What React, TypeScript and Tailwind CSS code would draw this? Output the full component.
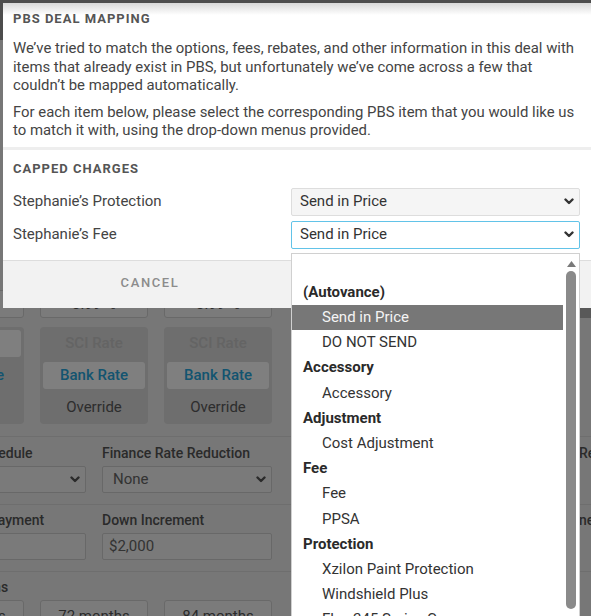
import React from "react";

const groups = [
  { label: "(Autovance)", items: ["Send in Price", "DO NOT SEND"] },
  { label: "Accessory", items: ["Accessory"] },
  { label: "Adjustment", items: ["Cost Adjustment"] },
  { label: "Fee", items: ["Fee", "PPSA"] },
  {
    label: "Protection",
    items: ["Xzilon Paint Protection", "Windshield Plus", "Flex 245 Series C"],
  },
];

function Chevron({ color = "#333" }: { color?: string }) {
  return (
    <svg width="10" height="7" viewBox="0 0 10 7" fill="none">
      <path
        d="M1.5 1.5 5 5l3.5-3.5"
        stroke={color}
        strokeWidth="2.4"
        strokeLinecap="round"
        strokeLinejoin="round"
      />
    </svg>
  );
}

function RateBox({ text }: { text: string }) {
  return (
    <div className="flex h-[28px] w-[108px] items-center justify-center rounded-[3px] border border-[#d2d2d2] bg-[#f7f7f7] text-[15px] text-[#5a5a5a]">
      {text}
    </div>
  );
}

function RateCard({ first }: { first?: boolean }) {
  return (
    <div className="flex h-[97px] w-[108px] flex-col gap-[5px] rounded-[4px] bg-[#dcdcdc] p-[3px] text-[15px]">
      <div
        className={`flex h-[27px] items-center justify-center rounded-[3px] font-medium ${
          first ? "bg-white text-[#5a5a5a]" : "text-[#c8c8c8]"
        }`}
      >
        SCI Rate
      </div>
      <div
        className={`flex h-[27px] items-center justify-center rounded-[3px] font-medium text-[#26a8e0] ${
          first ? "" : "bg-[#ffffff]"
        }`}
      >
        Bank Rate
      </div>
      <div className="flex h-[27px] items-center justify-center rounded-[3px] text-[#5a5a5a]">
        Override
      </div>
    </div>
  );
}

function Row({
  left,
  right,
  className = "",
}: {
  left: React.ReactNode;
  right?: React.ReactNode;
  className?: string;
}) {
  return (
    <div className={`ml-[-84px] flex ${className}`}>
      <div className="w-[356px] shrink-0">{left}</div>
      <div className="w-[307px] shrink-0" />
      <div className="w-[200px] shrink-0">{right}</div>
    </div>
  );
}

function Field({ label, children }: { label: string; children: React.ReactNode }) {
  return (
    <div className="w-[170px]">
      <div className="h-[18px] text-[14px] leading-[18px] font-medium whitespace-nowrap text-[#555]">
        {label}
      </div>
      <div className="mt-[4px]">{children}</div>
    </div>
  );
}

function PageSelect({ value }: { value: string }) {
  return (
    <div className="flex h-[27px] items-center justify-between rounded-[2px] border border-[#d0d0d0] bg-[#f4f4f4] pr-[5px] pl-[10px] text-[15px] text-[#666]">
      <span>{value}</span>
      <Chevron color="#555" />
    </div>
  );
}

function PageInput({ value }: { value: string }) {
  return (
    <div className="flex h-[27px] items-center rounded-[2px] border border-[#d0d0d0] bg-[#f4f4f4] pl-[6px] text-[15px] text-[#666]">
      {value}
    </div>
  );
}

function BackgroundPage() {
  return (
    <div className="h-full bg-[#eeeeee]">
      <div className="h-[290px]">
        <div className="h-[40px] bg-[#9a9a9a]" />
      </div>
      <Row
        left={
          <div className="flex gap-[16px]">
            <RateBox text="3.49 %" />
            <RateBox text="3.99 %" />
            <RateBox text="3.99 %" />
          </div>
        }
        right={<div className="h-[28px] bg-[#b3b3b3]" />}
      />
      <Row
        className="mt-[9px]"
        left={
          <div className="flex gap-[16px]">
            <RateCard first />
            <RateCard />
            <RateCard />
          </div>
        }
      />
      <div className="mt-[12px] border-t border-[#dcdcdc] pt-[7px]">
        <Row
          left={
            <div className="flex gap-[16px]">
              <Field label="Payment Schedule">
                <PageSelect value="Monthly" />
              </Field>
              <Field label="Finance Rate Reduction">
                <PageSelect value="None" />
              </Field>
            </div>
          }
          right={
            <div className="text-[14px] leading-[18px] font-medium text-[#555]">Residual</div>
          }
        />
      </div>
      <div className="mt-[11px] border-t border-[#dcdcdc] pt-[6px]">
        <Row
          left={
            <div className="flex gap-[16px]">
              <Field label="Max. Down Payment">
                <PageInput value="$10,000" />
              </Field>
              <Field label="Down Increment">
                <PageInput value="$2,000" />
              </Field>
            </div>
          }
          right={
            <div className="text-[14px] leading-[18px] font-medium text-[#555]">
              net Increment
            </div>
          }
        />
      </div>
      <div className="mt-[11px] border-t border-[#dcdcdc] pt-[6px]">
        <Row
          left={
            <div>
              <div className="h-[18px] text-[14px] leading-[18px] font-medium text-[#555]">
                Finance Terms
              </div>
              <div className="mt-[4px] flex gap-[16px]">
                {["60 months", "72 months", "84 months"].map((t) => (
                  <div
                    key={t}
                    className="flex h-[33px] w-[108px] items-center justify-center rounded-[3px] border border-[#d2d2d2] bg-[#f7f7f7] text-[15px] text-[#555]"
                  >
                    {t}
                  </div>
                ))}
              </div>
            </div>
          }
        />
      </div>
    </div>
  );
}

function MappingSelect({ focused }: { focused?: boolean }) {
  return (
    <div
      className={`flex h-[28px] w-[289px] items-center justify-between rounded-[2px] border pr-[5px] pl-[8px] text-[15px] text-[#333] ${
        focused ? "border-[#62c3e8] bg-white" : "border-[#dddddd] bg-[#f5f5f5]"
      }`}
    >
      <span>Send in Price</span>
      <Chevron />
    </div>
  );
}

function Dropdown() {
  return (
    <div className="absolute top-[253px] left-[291px] flex h-[380px] w-[289px] border border-[#d0d0d0] bg-white text-[15px] text-[#333]">
      <div className="w-[271px]">
        <div className="h-[25.5px]" />
        {groups.map((g) => (
          <div key={g.label}>
            <div className="flex h-[25.2px] items-center pl-[11px] font-bold text-[#2a2a2a]">
              {g.label}
            </div>
            {g.items.map((item) => (
              <div
                key={item}
                className={`flex h-[25.2px] items-center pl-[30px] ${
                  item === "Send in Price" && g.label === "(Autovance)"
                    ? "bg-[#777777] text-[#f4f4f4]"
                    : ""
                }`}
              >
                {item}
              </div>
            ))}
          </div>
        ))}
      </div>
      <div className="flex flex-1 flex-col items-center pt-[7px]">
        <svg width="9" height="6" viewBox="0 0 9 6">
          <path d="M4.5 0 9 6H0z" fill="#7a7a7a" />
        </svg>
        <div className="mt-[4px] h-[338px] w-[10px] rounded-full bg-[#8a8a8a]" />
      </div>
    </div>
  );
}

function MappingModal() {
  return (
    <div className="absolute top-[3px] left-[3px] w-[588px] bg-[linear-gradient(to_bottom,#d8d8d8,#ffffff_12px)] text-[#444]">
      <div className="pt-[8px] pr-[11px] pb-[7px] pl-[10px]">
        <h2 className="text-[13px] leading-[16px] font-bold tracking-[1px] text-[#555]">
          PBS DEAL MAPPING
        </h2>
        <p className="mt-[12px] text-[14.9px] leading-[18.5px] whitespace-nowrap">
          We’ve tried to match the options, fees, rebates, and other information in this deal with
          <br />
          items that already exist in PBS, but unfortunately we’ve come across a few that
          <br />
          couldn’t be mapped automatically.
        </p>
        <p className="mt-[8px] text-[14.9px] leading-[18.5px] whitespace-nowrap">
          For each item below, please select the corresponding PBS item that you would like us
          <br />
          to match it with, using the drop-down menus provided.
        </p>
      </div>
      <div className="border-t-[3px] border-[#eeeeee] pt-[11px] pr-[11px] pb-[11px] pl-[10px]">
        <h3 className="text-[13px] leading-[16px] font-bold tracking-[1px] text-[#555]">
          CAPPED CHARGES
        </h3>
        <div className="mt-[11px] flex flex-col gap-[5px] text-[15px]">
          <div className="flex items-center justify-between">
            <span>Stephanie’s Protection</span>
            <MappingSelect />
          </div>
          <div className="flex items-center justify-between">
            <span>Stephanie’s Fee</span>
            <MappingSelect focused />
          </div>
        </div>
      </div>
      <div className="flex h-[48px] border-t border-[#dddddd] bg-[#f2f2f2] text-[13px] font-medium tracking-[1.6px] text-[#8c8c8c]">
        <button className="flex-1 pb-[2px]">CANCEL</button>
        <button className="flex-1 pb-[2px]">CONTINUE</button>
      </div>
    </div>
  );
}

export default function App() {
  return (
    <div className="relative h-[616px] w-[591px] overflow-hidden font-['Roboto',sans-serif]">
      <BackgroundPage />
      <div className="absolute inset-0 bg-black/50" />
      <MappingModal />
      <Dropdown />
    </div>
  );
}
